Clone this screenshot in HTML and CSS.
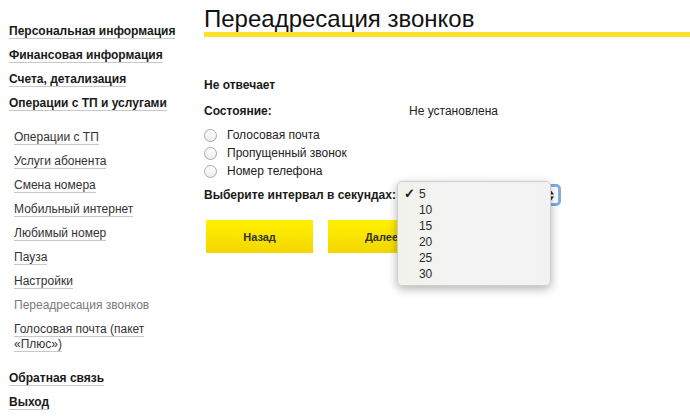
FILE: index.html
```html
<!DOCTYPE html>
<html lang="ru">
<head>
    <meta charset="UTF-8">
    <meta name="viewport" content="width=device-width, initial-scale=1.0">
    <title>Переадресация звонков</title>
    <link rel="stylesheet" href="styles.css">
</head>
<body>
    <div class="page">
        <aside class="sidebar">
            <ul class="menu">
                <li><a href="#">Персональная информация</a></li>
                <li><a href="#">Финансовая информация</a></li>
                <li><a href="#">Счета, детализация</a></li>
                <li><a href="#">Операции с ТП и услугами</a></li>
            </ul>
            <ul class="submenu">
                <li><a href="#">Операции с ТП</a></li>
                <li><a href="#">Услуги абонента</a></li>
                <li><a href="#">Смена номера</a></li>
                <li><a href="#">Мобильный интернет</a></li>
                <li><a href="#">Любимый номер</a></li>
                <li><a href="#">Пауза</a></li>
                <li><a href="#">Настройки</a></li>
                <li class="current">Переадресация звонков</li>
                <li><a href="#">Голосовая почта (пакет «Плюс»)</a></li>
            </ul>
            <ul class="menu">
                <li><a href="#">Обратная связь</a></li>
                <li><a href="#">Выход</a></li>
            </ul>
        </aside>

        <main class="content">
            <h1>Переадресация звонков</h1>
            <form class="forward-form" onsubmit="return false">
                <div class="case-title">Не отвечает</div>
                <div class="state-row">
                    <span class="state-label">Состояние:</span>
                    <span>Не установлена</span>
                </div>
                <ul class="options">
                    <li><label><input type="radio" name="target"> Голосовая почта</label></li>
                    <li><label><input type="radio" name="target"> Пропущенный звонок</label></li>
                    <li><label><input type="radio" name="target"> Номер телефона</label></li>
                </ul>
                <div class="interval-row">
                    <span class="interval-label">Выберите интервал в секундах:</span>
                    <div class="select-box">
                        <span class="select-value">5</span>
                        <svg class="select-arrows" width="6" height="11" viewBox="0 0 6 11">
                            <path d="M0 4.5 L3 0.5 L6 4.5 Z M0 6.5 L3 10.5 L6 6.5 Z" fill="#222"/>
                        </svg>
                        <ul class="select-popup">
                            <li class="checked"><span class="check">✓</span>5</li>
                            <li><span class="check"></span>10</li>
                            <li><span class="check"></span>15</li>
                            <li><span class="check"></span>20</li>
                            <li><span class="check"></span>25</li>
                            <li><span class="check"></span>30</li>
                        </ul>
                    </div>
                </div>
                <div class="actions">
                    <button class="btn">Назад</button>
                    <button class="btn">Далее</button>
                </div>
            </form>
        </main>
    </div>
</body>
</html>
```

FILE: styles.css
```css
body { margin: 0; font-family: "Liberation Sans", Arial, sans-serif; font-size: 12px; color: #222; background: #fff; }
.page { display: flex; }

/* sidebar */
.sidebar { width: 204px; flex-shrink: 0; padding-top: 24px; display: flex; flex-direction: column; }
ul { list-style: none; margin: 0; padding: 0; }
.menu li { margin: 0 0 9px 9px; line-height: 15px; font-weight: bold; }
.menu a { color: #1a1a1a; text-decoration: none; border-bottom: 1px solid #c8c8c8; }
.submenu { margin: 10px 0 10px 14px; width: 150px; }
.submenu li { margin-bottom: 9px; line-height: 15px; }
.submenu a { color: #333; text-decoration: none; border-bottom: 1px solid #c8c8c8; }
.submenu .current { color: #7a7a7a; }

/* content */
.content { flex: 1; }
h1 { margin: 5px 0 0; font-size: 24px; font-weight: normal; line-height: 27px; color: #111; border-bottom: 5px solid #fde22c; }
.forward-form { margin-top: 41px; }
.case-title { font-weight: bold; line-height: 15px; color: #1a1a1a; }
.state-row { display: flex; margin-top: 11px; line-height: 15px; color: #222; }
.state-label { width: 205px; font-weight: bold; color: #1a1a1a; }
.options { margin-top: 7px; }
.options li { line-height: 18px; height: 18px; }
.options label { display: flex; align-items: center; gap: 10px; color: #222; }
.options input {
    appearance: none; -webkit-appearance: none; margin: 0; width: 13px; height: 13px;
    border: 1px solid #a9a9a9; border-radius: 50%; background: linear-gradient(#fff, #ececec); box-sizing: border-box;
}

.interval-row { display: flex; align-items: center; margin-top: 5px; height: 20px; }
.interval-label { font-weight: bold; color: #1a1a1a; }
.select-box {
    position: relative; margin-left: 3px; width: 160px; height: 18px; box-sizing: border-box;
    border: 1px solid #8fb2e3; border-radius: 3px; background: #fff;
    box-shadow: 0 0 0 2px #7ea9e6; display: flex; align-items: center; justify-content: space-between; padding: 0 4px 0 6px;
}
.select-value { color: #222; }
.select-popup {
    position: absolute; left: -3px; top: -6px; width: 154px; height: 105px; box-sizing: border-box; padding-top: 4px;
    background: linear-gradient(to right, #f1f2ea, #f4f4f4 40%, #f2f2f2); border: 1px solid #cfcfcf; border-radius: 5px;
    box-shadow: 0 3px 10px rgba(0, 0, 0, 0.3);
}
.select-popup li { line-height: 16px; color: #2a2a2a; padding-left: 6px; }
.check { display: inline-block; width: 15px; font-size: 13px; font-weight: bold; color: #222; }

.actions { display: flex; gap: 15px; margin: 15px 0 0 2px; }
.btn {
    width: 107px; height: 33px; border: none; font-family: inherit; font-size: 11px; font-weight: bold; color: #333;
    background: linear-gradient(#fff100, #f3d600); cursor: pointer;
}
```
